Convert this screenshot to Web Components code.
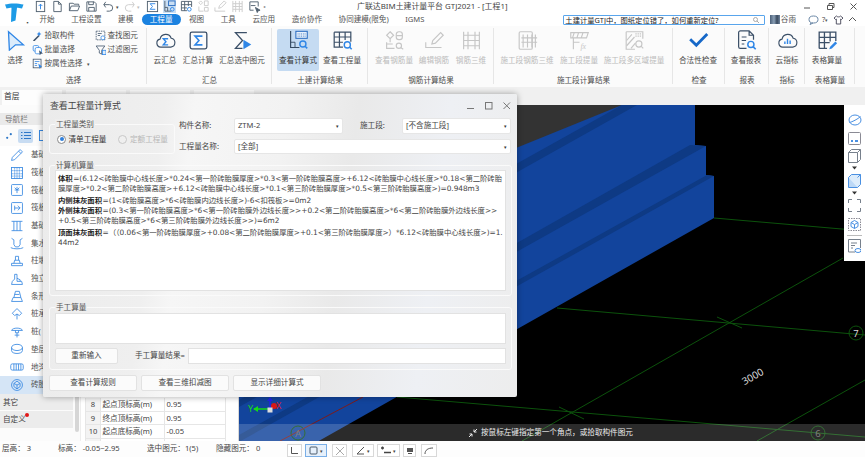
<!DOCTYPE html>
<html lang="zh">
<head>
<meta charset="utf-8">
<title>GTJ2021</title>
<style>
    html, body { margin: 0; padding: 0; background: #fff; overflow: hidden; }
</style>
</head>
<body>

<gtj-app>
    <gtj-header slot="header"></gtj-header>
    <gtj-ribbon slot="ribbon">
        <gtj-group w="147" pad="4">
            <gtj-btn icon="select" w="22">选择</gtj-btn>
            <gtj-mini-col style="margin-left:6px;width:62px">
                <gtj-mini icon="wand">拾取构件</gtj-mini>
                <gtj-mini icon="batch">批量选择</gtj-mini>
                <gtj-mini icon="attr" style="width:70px">按属性选择<i slot="after">▾</i></gtj-mini>
            </gtj-mini-col>
            <gtj-mini-col style="margin-left:1px">
                <gtj-mini icon="find">查找图元</gtj-mini>
                <gtj-mini icon="filter">过滤图元</gtj-mini>
            </gtj-mini-col>
            <span slot="label">选择</span>
        </gtj-group>
        <gtj-group w="125" pad="2">
            <gtj-btn icon="cloudsum" w="32">云汇总</gtj-btn>
            <gtj-btn icon="sumbox" w="34">汇总计算</gtj-btn>
            <gtj-btn icon="sumsel" w="54">汇总选中图元</gtj-btn>
            <span slot="label">汇总</span>
        </gtj-group>
        <gtj-group w="96" pad="5">
            <gtj-btn icon="calcview" w="42" active>查看计算式</gtj-btn>
            <gtj-btn icon="qtyview" w="46">查看工程量</gtj-btn>
            <span slot="label">土建计算结果</span>
        </gtj-group>
        <gtj-group w="126" pad="6">
            <gtj-btn icon="rebarqty" w="40" off>查看钢筋量</gtj-btn>
            <gtj-btn icon="rebaredit" w="40" off>编辑钢筋</gtj-btn>
            <gtj-btn icon="rebar3d" w="34" off>钢筋三维</gtj-btn>
            <span slot="label">钢筋计算结果</span>
        </gtj-group>
        <gtj-group w="179" pad="4">
            <gtj-btn icon="stage3d" w="58" off>施工段钢筋三维</gtj-btn>
            <gtj-btn icon="stageqty" w="46" off>施工段提量</gtj-btn>
            <gtj-btn icon="stagemulti" w="64" off>施工段多区域提量</gtj-btn>
            <span slot="label">施工段计算结果</span>
        </gtj-group>
        <gtj-group w="52" pad="3">
            <gtj-btn icon="check" w="44">合法性检查</gtj-btn>
            <span slot="label">检查</span>
        </gtj-group>
        <gtj-group w="44" pad="2">
            <gtj-btn icon="report" w="38">查看报表</gtj-btn>
            <span slot="label">报表</span>
        </gtj-group>
        <gtj-group w="36" pad="2">
            <gtj-btn icon="cloudidx" w="32">云指标</gtj-btn>
            <span slot="label">指标</span>
        </gtj-group>
        <gtj-group w="50" pad="4">
            <gtj-btn icon="tablecalc" w="36">表格算量</gtj-btn>
            <span slot="label">表格算量</span>
        </gtj-group>
    </gtj-ribbon>
    <gtj-floorbar slot="floorbar"></gtj-floorbar>
    <gtj-nav slot="nav"></gtj-nav>
    <gtj-props slot="props"></gtj-props>
    <gtj-canvas slot="canvas"></gtj-canvas>
    <gtj-status slot="status"></gtj-status>

    <gtj-dialog slot="dialog">
        <span slot="title">查看工程量计算式</span>
        <gtj-calc-form></gtj-calc-form>
    </gtj-dialog>
</gtj-app>

<script>
// stroke colours used by the ribbon icons
const DK = '#3c5068', BL = '#2f86e6', GR = '#c6c6c6';

const ICONS = {
    select: `<path d="M4 2l17 15h-9l-7 6z" fill="#dcecfb" stroke="${BL}" stroke-width="1.5"/>`,
    cloudsum: `<path d="M6.5 19.5a4.6 4.6 0 0 1-.7-9.1A6.6 6.6 0 0 1 18.5 9.400a5.100 5.100 0 0 1-.4 10.100z" fill="none" stroke="${DK}" stroke-width="1.300"/><path d="M15 10H9.500l3 3.500-3 3.500H15" fill="none" stroke="${BL}" stroke-width="1.600"/>`,
    sumbox: `<rect x="2.500" y="2.500" width="19" height="19" rx="2" fill="none" stroke="${DK}" stroke-width="1.500"/><path d="M16.500 7H8l4.500 5L8 17h8.500" fill="none" stroke="${BL}" stroke-width="1.800"/>`,
    sumsel: `<path d="M17 3H4l8 9-8 9h8" fill="none" stroke="${DK}" stroke-width="1.500"/><path d="M13 11l9 5.500-9 5.500z" fill="${BL}"/>`,
    calcview: `<rect x="9" y="1.500" width="13" height="8" fill="#e8f1fb" stroke="#2a6cc0" stroke-width="1.200"/><path d="M11 4.500h9M11 7h9" stroke="#2a6cc0" stroke-dasharray="1 1"/><path d="M3 1v19h10" fill="none" stroke="#33485f" stroke-width="1.300"/><path d="M3 14h5v6" fill="none" stroke="#33485f"/><circle cx="17" cy="16" r="3.500" fill="none" stroke="${BL}" stroke-width="1.600"/><path d="M19.500 18.500L22 21" stroke="${BL}" stroke-width="1.800"/>`,
    qtyview: `<path d="M2.500 2.500h19v11M2.500 2.500v17h10M2.500 8h19M2.500 14h10M8.500 2.500v17M15 2.500v9" fill="none" stroke="${DK}" stroke-width="1.400"/><circle cx="17.500" cy="17" r="3.500" fill="none" stroke="${BL}" stroke-width="1.600"/><path d="M20 19.500l2.500 2.500" stroke="${BL}" stroke-width="1.800"/>`,
    rebarqty: `<g fill="none" stroke="${GR}" stroke-width="1.300"><path d="M7 2l4 4-4 4-4-4zM7 10v4"/><rect x="14" y="2" width="7" height="9" rx="3"/><path d="M14 6.500h7M3 14v7h9M3 16h7"/><circle cx="17" cy="18" r="3"/><path d="M19 20l3 2"/></g>`,
    rebaredit: `<g fill="none" stroke="${GR}" stroke-width="1.300"><path d="M2 14v6h18"/><path d="M9 16l1-4 9-9 3 3-9 9z"/></g>`,
    rebar3d: `<g fill="none" stroke="${GR}" stroke-width="1.300"><path d="M3 2v20M8 2v20M16 2v20M21 2v20M3 6h18M3 12h18M3 18h18"/></g>`,
    stage3d: `<g fill="none" stroke="${GR}" stroke-width="1.300"><rect x="2.500" y="2" width="15" height="20" rx="1.500"/><path d="M7 5v15M12 5v15M17 5v15M21 5v15M5 9h18M5 14h18"/></g>`,
    stageqty: `<g fill="none" stroke="${GR}" stroke-width="1.300"><path d="M5 22V9M2 3h20l-2 6H2zM6 3L4 9M11 3L9 9M16 3l-2 6M5 14h7"/></g><text x="13" y="22" font-size="9" font-style="italic" font-family="Liberation Serif" fill="${GR}">fx</text>`,
    stagemulti: `<g fill="none" stroke="${GR}" stroke-width="1.300"><path d="M2.500 2h19v8M2.500 2v20h10"/><path d="M3 12L9 5M3 18L12 8M8 21l5-6"/><path d="M13 4.500h7M13 7h7" stroke-dasharray="1.500 1"/><circle cx="17" cy="16" r="3.500"/><path d="M19.500 18.500L22 21"/></g>`,
    check: `<path d="M2.500 10.500l7 7L22 4.500" fill="none" stroke="#1668c8" stroke-width="3.200"/>`,
    report: `<path d="M12 21H5a2 2 0 0 1-2-2V3a2 2 0 0 1 2-2h10l5 5v5M15 1v5h5M6.500 8H12M6.500 12h5M6.500 16h3" fill="none" stroke="${DK}" stroke-width="1.400"/><circle cx="17" cy="16.500" r="3.500" fill="none" stroke="${BL}" stroke-width="1.700"/><path d="M19.500 19l3 3" stroke="${BL}" stroke-width="1.900"/>`,
    cloudidx: `<path d="M6.500 19.500a4.600 4.600 0 0 1-.7-9.100A6.600 6.600 0 0 1 18.500 9.400a5.100 5.100 0 0 1-.4 10.100z" fill="none" stroke="${DK}" stroke-width="1.300"/><path d="M9 16v-3M12 16v-6M15 16v-4" stroke="${BL}" stroke-width="1.600"/>`,
    tablecalc: `<path d="M2.500 21V2.500h19v10M2.500 21h9M2.500 8.500h19M2.500 14.500h12M8.500 2.500V21M15 2.500V13" fill="none" stroke="${DK}" stroke-width="1.500"/><path d="M14 22l1-3 6-6 2 2-6 6z" fill="${BL}"/>`,

    wand: `<path d="M2 14L9 7" stroke="${DK}" stroke-width="2"/><path d="M9 2l1 2 2 1-2 1-1 2-1-2-2-1 2-1z" fill="${BL}"/>`,
    batch: `<rect x="1.500" y="2" width="7" height="7" rx="1.500" fill="none" stroke="${BL}"/><rect x="4" y="4.500" width="8" height="8" rx="2" fill="#fff" stroke="${BL}"/><path d="M9 8l5 4-3 .5-1 2.500z" fill="${DK}"/>`,
    attr: `<rect x="1.500" y="1.500" width="10" height="11" fill="none" stroke="${DK}"/><path d="M3.500 4.500h6M3.500 7h3M3.500 9.500h3" stroke="${BL}"/><path d="M8 7l5 4-2.500.5-1 2.500z" fill="${BL}"/>`,
    find: `<rect x="1.500" y="1.500" width="11" height="11" fill="none" stroke="${DK}" stroke-dasharray="2 1"/><path d="M3.500 4.500h5M3.500 7h3" stroke="${DK}"/><circle cx="10" cy="10" r="2.500" fill="#fff" stroke="${BL}"/>`,
    filter: `<path d="M1.500 2.500h11L8.500 8v5l-3-1.500V8z" fill="none" stroke="${DK}"/><rect x="9.500" y="8" width="4.500" height="5.500" fill="#dcecfb" stroke="${BL}"/>`,
};

const NAV_ICONS = [
    `<path d="M2 16l1-4L13 2l3 3L6 15z M11 4l3 3"/>`,
    `<rect x="2" y="2" width="14" height="14"/><path d="M2 6h14M2 10h14M2 13h14M6 2v14M9 2v14M12 2v14" stroke-dasharray="1.500 1"/>`,
    `<rect x="2" y="2" width="14" height="14" rx="1"/><path d="M9 5v8M6 9h6M6 6l3 3 3-3"/>`,
    `<rect x="2" y="2" width="14" height="14" rx="1"/><path d="M6 9h7M10 6l3 3-3 3M6 6v6"/>`,
    `<path d="M2 3h14M2 15h14M5 3v12M9 3v12M13 3v12"/>`,
    `<path d="M2 3l3 2v6l2 3h4l2-3V5l3-2M1 15c3 2 13 2 16 0"/>`,
    `<path d="M2 15h14v-3H2zM5 12l1-4h6l1 4M7 8V3h4v5"/>`,
    `<path d="M2 16h14l-1-4H9V3H6v6L3 12zM9 8l4 2v2"/>`,
    `<path d="M2 16h14l-2-5H4zM5 11l2-8h5l2 8M6 7h6"/>`,
    `<path d="M9 2l6 6-3 3-3-2-3 2-3-3zM9 9v7"/>`,
    `<path d="M2 7c1-4 13-4 14 0zM7 7v3h4V7M9 10v6M6 13h6"/>`,
    `<ellipse cx="9" cy="7" rx="7" ry="4"/><path d="M2 7v4c0 5 14 5 14 0V7"/>`,
    `<rect x="1" y="5" width="16" height="8" rx="2"/><path d="M5 5v8M8 5v8M11 5v8M14 5v8"/>`,
    `<circle cx="9" cy="9" r="7"/><path d="M9 4l4 3v4l-4 3-4-3V7zM5 7l4 2 4-2M9 9v5"/>`,
];

// small helper, every element has its own <style> and an open shadow root
function define(name, css, html, init) {
    customElements.define(name, class extends HTMLElement {
        constructor() {
            super();
            this.attachShadow({ mode: 'open' });
            this.shadowRoot.innerHTML = `<style>${css}</style>${typeof html === 'function' ? html(this) : html}`;
        }
        connectedCallback() {
            if (init) init(this);
        }
    });
}

const FONT = `"Noto Sans", "Noto Sans CJK SC", sans-serif`;

define('gtj-app', `
    :host {
        display: block; position: relative; width: 865px; height: 457px; overflow: hidden;
        font: 7.6px/1.2 ${FONT}; color: #4a4a4a; background: #fff;
    }
    .shell { display: grid; grid-template-columns: 81px 158px 1fr; grid-template-rows: 26px 61px 18px 336px 16px; height: 100%; }
    .full { grid-column: 1 / -1; }
    .main-cell { min-width: 0; min-height: 0; }
    ::slotted([slot="dialog"]) { position: absolute; left: 43px; top: 94px; }
`, `
    <div class="shell">
        <div class="full"><slot name="header"></slot></div>
        <div class="full"><slot name="ribbon"></slot></div>
        <div class="full"><slot name="floorbar"></slot></div>
        <div class="main-cell"><slot name="nav"></slot></div>
        <div class="main-cell"><slot name="props"></slot></div>
        <div class="main-cell"><slot name="canvas"></slot></div>
        <div class="full"><slot name="status"></slot></div>
    </div>
    <slot name="dialog"></slot>
`);

const qat = (d, opt = {}) => `<svg class="q ${opt.cls || ''}" viewBox="0 0 14 14" width="13" height="13" fill="none" stroke="${opt.c || '#50606f'}">${d}</svg>`;

define('gtj-header', `
    :host { display: flex; height: 26px; background: #fff; }
    .logo { width: 31.500px; flex: none; position: relative; }
    .logo svg { display: block; margin: 2px 0 0 4px; }
    .logo i { position: absolute; left: 25px; top: 18px; font: normal 5px ${FONT}; color: #444; }
    .col { flex: 1; min-width: 0; }
    .top { display: flex; height: 13px; align-items: center; }
    .qat { width: 325.500px; flex: none; display: flex; align-items: center; }
    .q { flex: none; margin-right: 4px; }
    .hl { background: #c9def3; }
    .title { flex: none; font-size: 7.900px; color: #444; white-space: nowrap; }
    .win { margin-left: auto; display: flex; gap: 14px; padding-right: 7px; }
    .tabs { display: flex; align-items: center; height: 13px; white-space: nowrap; }
    .tab { padding: 1px 8px; height: 11px; line-height: 9px; box-sizing: border-box; margin-right: 0.500px; color: #555; border-radius: 6px; }
    .tab.on { background: #1b82e0; color: #fff; }
    .search {
        position: relative; flex: none; margin-left: 130px; width: 202px; height: 10px; box-sizing: border-box; border: 1px solid #59a5ec;
        background: #fff; border-radius: 1px; color: #222; font-size: 7.300px; line-height: 8px; padding-left: 1.500px; overflow: hidden;
    }
    .right { display: flex; align-items: center; margin-left: 5px; color: #555; }
    .ava { width: 10px; height: 9px; margin-right: 1px; background: linear-gradient(90deg, #4a5f78, #8a9fb5 40%, #38495e 70%, #6f849c); }
    .right svg { margin-left: 5px; }
`, `
    <div class="logo">
        <svg width="20" height="20" viewBox="0 0 20 20"><path d="M1 2.500C6 1 14 1 19.500 2.500L18 6.500c-2-.5-4-.7-5-.7L11.500 18.500 7 20l.5-14.200c-1.500 0-3 .2-5 .7z" fill="#1d9be6"/></svg>
        <i>▪</i>
    </div>
    <div class="col">
        <div class="top">
            <div class="qat" style="padding-left:2px;box-sizing:border-box">
                ${qat('<rect x="2.500" y="1.500" width="9" height="11"/><path d="M7 10V4.500M5 6.500l2-2 2 2" stroke="#2f86e6"/>')}
                ${qat('<path d="M3 1.500h5l3 3v8H3zM8 1.500v3h3"/>')}
                ${qat('<path d="M1.500 11.500v-8h4l1 1h5v1.500M1.500 11.500l2-5h9l-2 5z"/>')}
                ${qat('<path d="M2 2h8l2 2v8H2zM4 2v3h5V2M4 12V8h6v4"/>')}
                ${qat('<path d="M4 2L2 5h6a3 3 0 0 1 0 7H5M2 5l2 3"/>')}
                <span style="margin:0 4px 0 -3px;font-size:5px">▾</span>
                ${qat('<path d="M10 2l2 3H6a3 3 0 0 0 0 7h3M12 5l-2 3"/>', { c: '#ccc' })}
                <span style="margin:0 6px 0 -3px;font-size:5px;color:#bbb">▾</span>
                ${qat('<rect x="1.500" y="1.500" width="11" height="11"/><path d="M10 4H4.500L7 7l-2.500 3H10" stroke="#2f86e6"/>')}
                ${qat('<rect x="6" y="1" width="7" height="5" stroke="#2a6cc0"/><path d="M2 1v11h7M2 8h3v4"/><circle cx="10" cy="10" r="2" stroke="#2f86e6"/>', { cls: 'hl' })}
                ${qat('<path d="M1.500 1.500h11v6M1.500 1.500v10h6M1.500 5h11M1.500 8.500h6M5 1.500v10M9 1.500v5"/><circle cx="10" cy="10" r="2" stroke="#2f86e6"/>')}
                ${qat('<path d="M4 1l2 2-2 2-2-2zM8 1h4v5H8zM2 7v5h5M8 8h4v4H8z"/>', { c: '#ccc' })}
                ${qat('<path d="M1 8v4h11M5 9l1-3 5-5 2 2-5 5z"/>', { c: '#ccc' })}
                ${qat('<path d="M2 1v12M5 1v12M9 1v12M12 1v12M2 4h10M2 7h10M2 10h10"/>', { c: '#ccc' })}
                ${qat('<path d="M2 2h9v5M2 2v9h4M3 6h5"/><path d="M8 8l5 3-2 .5-1 2z" fill="#50606f"/>')}
                <span style="font-size:6px;margin-left:-1px">₌</span>
            </div>
            <div class="title">广联达BIM土建计量平台 GTJ2021 - [工程1]</div>
            <div class="win">
                <svg width="9" height="9" viewBox="0 0 9 9" fill="none" stroke="#555"><path d="M1 6h6"/></svg>
                <svg width="9" height="9" viewBox="0 0 9 9" fill="none" stroke="#555"><path d="M1.500 3.500h5v4h-5zM3 3.500V1.500h5v4H6.500"/></svg>
                <svg width="9" height="9" viewBox="0 0 9 9" fill="none" stroke="#555"><path d="M1.500 1.500l6 6M7.500 1.500l-6 6"/></svg>
            </div>
        </div>
        <div class="tabs">
            <span class="tab">开始</span><span class="tab">工程设置</span><span class="tab">建模</span><span class="tab on">工程量</span><span class="tab">视图</span><span class="tab">工具</span><span class="tab">云应用</span><span class="tab">造价协作</span><span class="tab">协同建模(限免)</span><span class="tab">IGMS</span>
            <div class="search">土建计量GTJ中，图纸定位错了，如何重新定位?
                <svg style="position:absolute;right:5px;top:1px" width="6" height="6" viewBox="0 0 6 6" fill="none" stroke="#aaa"><circle cx="2.500" cy="2.500" r="2"/><path d="M4 4l2 2"/></svg>
            </div>
            <div class="right">
                <span class="ava"></span><span>谷雨</span>
                <svg style="margin-left:12px" width="11" height="10" viewBox="0 0 11 10" fill="none" stroke="#6a87a6"><ellipse cx="5.500" cy="4.500" rx="4.500" ry="3.500"/><path d="M3 8l-1 1.500L5 8"/></svg>
                <span style="margin-left:3px">?</span><span style="font-size:5px">▾</span>
                <svg width="11" height="10" viewBox="0 0 11 10" fill="none" stroke="#556"><path d="M3.500 1L1 3l1.500 1.500.8-.5v5h4.400V4l.8.500L10 3 7.500 1c-.5 1.200-3.500 1.200-4 0z"/></svg>
                <svg style="margin-left:4px" width="9" height="7" viewBox="0 0 9 7" fill="none" stroke="#555"><path d="M1 5l3.500-3.500L8 5"/></svg>
            </div>
        </div>
    </div>
`);

define('gtj-ribbon', `
    :host { display: flex; height: 61px; background: #fbfbfb; }
`, `<slot></slot>`);

define('gtj-group', `
    :host { display: flex; flex-direction: column; flex: none; box-sizing: border-box; height: 61px; padding-top: 3px; position: relative; }
    .items { display: flex; height: 42px; flex: none; align-items: stretch; }
    .label { text-align: center; margin-top: 3px; height: 13px; line-height: 13px; color: #4d4d4d; white-space: nowrap; }
    .sep { position: absolute; right: 0; top: 2px; bottom: 3px; width: 1px; background: #e6e6e6; }
`, el => `
    <div class="items" style="padding-left:${el.getAttribute('pad')}px"><slot></slot></div>
    <div class="label"><slot name="label"></slot></div>
    <div class="sep"></div>
`, el => { el.style.width = el.getAttribute('w') + 'px'; });

define('gtj-btn', `
    :host { display: flex; flex-direction: column; align-items: center; flex: none; box-sizing: border-box; border-radius: 2px; white-space: nowrap; color: #4d4d4d; }
    :host([active]) { background: #c5dbf2; color: #333; }
    :host([off]) { color: #bcbcbc; }
    svg { display: block; margin-top: 1px; }
    .t { margin-top: 4px; line-height: 10px; }
`, el => `
    <svg width="21" height="21" viewBox="0 0 24 24">${ICONS[el.getAttribute('icon')]}</svg>
    <div class="t"><slot></slot></div>
`, el => { el.style.width = el.getAttribute('w') + 'px'; });

define('gtj-mini-col', `
    :host { display: flex; flex-direction: column; gap: 3px; padding-top: 1px; flex: none; }
`, `<slot></slot>`);

define('gtj-mini', `
    :host { display: flex; align-items: center; gap: 1.500px; height: 11px; white-space: nowrap; color: #4d4d4d; }
    svg { flex: none; }
    ::slotted(i) { font: normal 5px ${FONT}; margin-left: 3px; }
`, el => `
    <svg width="11" height="11" viewBox="0 0 14 14">${ICONS[el.getAttribute('icon')]}</svg>
    <slot></slot><slot name="after"></slot>
`);

define('gtj-floorbar', `
    :host { display: flex; height: 18px; box-sizing: border-box; background: #f0f0f0; padding: 3px 0 0 2px; gap: 4px; }
    .f { width: 60px; height: 15px; background: #fdfdfd; line-height: 13px; padding-left: 2px; box-sizing: border-box; color: #333; font-size: 7.800px; }
    .s { background: #fafafa; }
`, `
    <div class="f">首层</div><div class="f s"></div><div class="f s"></div><div class="f s"></div>
`);

define('gtj-nav', `
    :host { display: block; height: 336px; background: #fbfbfb; overflow: hidden; position: relative; border-right: 1px solid #eee; box-sizing: border-box; }
    .head { margin-top: 8px; height: 12px; background: #eaeaea; width: 75px; line-height: 12px; padding-left: 5px; box-sizing: border-box; color: #777; }
    .tools { display: flex; align-items: center; height: 21px; padding-left: 6px; gap: 6px; box-sizing: border-box; }
    .tools b { width: 15px; height: 14px; border-radius: 2px; background: #c8dcf2; display: grid; place-items: center; }
    .list { width: 75px; background: #fff; }
    .row { display: flex; align-items: center; height: 17.700px; padding-left: 10px; gap: 7px; white-space: nowrap; box-sizing: border-box; color: #555; }
    .row svg { flex: none; }
    .row.on { background: #d5e5f6; }
    .foot { width: 73px; height: 16.500px; margin-top: 1px; background: #ececec; line-height: 16px; padding-left: 3px; box-sizing: border-box; position: relative; color: #444; }
    .dot { position: absolute; left: 25px; top: 2px; width: 4px; height: 4px; border-radius: 50%; background: #e01818; }
    .bar { position: absolute; left: 75px; top: 280px; width: 4px; height: 47px; background: #d6d6d6; border-radius: 2px; }
`, () => {
    // only the start of each label shows beside the dialog
    const names = ['基础', '筏板', '筏板', '筏板', '基础', '集水', '柱墩', '独立', '条形', '桩承', '桩(', '垫层', '地沟', '砖胎'];
    const rows = names.map((n, i) => `
        <div class="row ${i === 13 ? 'on' : ''}">
            <svg width="14" height="14" viewBox="0 0 18 18" fill="none" stroke="#3a8ae2" stroke-width="1.100">${NAV_ICONS[i]}</svg>
            <span>${n}</span>
        </div>`).join('');
    return `
        <div class="head">导航栏</div>
        <div class="tools">
            <svg width="6" height="6" viewBox="0 0 6 6" fill="#2f78c8"><circle cx="1.200" cy="4.800" r="1.100"/><circle cx="4.800" cy="1.200" r="1.100"/></svg>
            <b><svg width="10" height="9" viewBox="0 0 10 9" stroke="#2f78c8"><path d="M3 1.500h7M3 4.500h7M3 7.500h7M0 1.500h1.500M0 4.500h1.500M0 7.500h1.500"/></svg></b>
            <svg width="11" height="11" viewBox="0 0 11 11" fill="none" stroke="#3a8ae2"><rect x=".5" y=".5" width="10" height="10"/></svg>
        </div>
        <div class="list">${rows}</div>
        <div class="foot" style="margin-top:0">其它</div>
        <div class="foot">自定义<i class="dot"></i></div>
        <i class="bar"></i>
    `;
});

define('gtj-props', `
    :host { display: block; height: 336px; background: #fff; overflow: hidden; border-right: 1px solid #d8d8d8; box-sizing: border-box; }
    .t { margin: 293px 0 0 4px; width: 140px; display: grid; grid-template-columns: 15px 64px 61px; grid-auto-rows: 13.500px; border-left: 1px solid #e6e6e6; box-sizing: border-box; }
    .t > div { border-right: 1px solid #e6e6e6; border-bottom: 1px solid #e6e6e6; box-sizing: border-box; line-height: 12.500px; padding-left: 1.500px; white-space: nowrap; color: #444; }
    .t > .n { background: #f3f3f3; text-align: center; padding: 0; }
`, `
    <div class="t">
        <div class="n">8</div><div>起点顶标高(m)</div><div>0.95</div>
        <div class="n">9</div><div>终点顶标高(m)</div><div>0.95</div>
        <div class="n">10</div><div>起点底标高(m)</div><div>-0.05</div>
        <div class="n"></div><div></div><div></div>
    </div>
`);

define('gtj-canvas', `
    :host { display: flex; flex-direction: column; justify-content: flex-end; position: relative; height: 336px; background: #000; overflow: hidden; }
    svg.scene { position: absolute; inset: 0; }
    .hint { position: relative; height: 17px; background: rgba(255,255,255,.17); display: flex; align-items: center; padding-left: 229px; gap: 3px; color: #eee; white-space: nowrap; }
    .tools { position: absolute; right: 0; top: 0; width: 21px; height: 156px; background: #fff; display: flex; flex-direction: column; align-items: center; padding-top: 8px; box-sizing: border-box; }
    .tools svg { display: block; flex: none; }
    .tools svg.arrow { margin-top: 2px; }
`, `
    <svg class="scene" width="626" height="336" viewBox="239 105 626 336">
        <polygon points="239,105 622,105 518,164 239,320" fill="#333"/>
        <polygon points="622,105 695,105 695,145 706,146 706,175 714,176 714,218 239,486 239,260" fill="#12449c"/>
        <polygon points="622,105 637,105 239,328 239,318" fill="#0e3a84"/>
        <polygon points="690,145 706,146 239,407 239,400" fill="#0e3a84"/>
        <polygon points="707,175 714,176 239,442 239,435" fill="#0e3a84"/>
        <g stroke="#0c520c" stroke-width="1" fill="none">
            <path d="M714 218L865 231"/>
            <path d="M557 308L865 335"/>
            <path d="M397 397L865 437"/>
            <path d="M522 441L843 258"/>
            <path d="M757 441L865 380"/>
            <path d="M717 317L742 328M559 407L584 419"/>
            <circle cx="856" cy="333" r="7"/>
            <circle cx="818" cy="433" r="7"/>
            <circle cx="298" cy="433" r="7"/>
        </g>
        <path d="M363 397L280 441" stroke="#7c1c1c" fill="none"/>
        <text x="856" y="336.500" text-anchor="middle" font-size="9.500" fill="#ddd" font-family="Noto Sans">7</text>
        <text x="818" y="436.500" text-anchor="middle" font-size="9.500" fill="#666" font-family="Noto Sans">6</text>
        <text x="298" y="436.500" text-anchor="middle" font-size="9.500" fill="#666" font-family="Noto Sans">A</text>
        <text x="753" y="380" text-anchor="middle" font-size="10" fill="#ddd" font-family="Noto Sans" transform="rotate(-30 753 377)">3000</text>
        <path d="M254 409H270" stroke="#17d917" stroke-width="1.500"/><path d="M253 409l5-3v6z" fill="#17d917"/>
        <path d="M270 409V399" stroke="#2222e8" stroke-width="1.500"/><path d="M270 397l-3 4h6z" fill="#2222e8"/>
        <circle cx="274" cy="406" r="3" fill="#d81818"/>
        <rect x="267.500" y="407.500" width="5" height="5" fill="#ddd"/>
        <text x="248" y="412" font-size="9" fill="#17d917" font-family="Noto Sans">Y</text>
        <text x="276" y="409" font-size="9" fill="#e01818" font-family="Noto Sans">X</text>
    </svg>
    <div class="hint">
        <svg width="10" height="10" viewBox="0 0 10 10" fill="none" stroke="#eee"><path d="M1 9l3-3M1.500 6H4v2.500M9 1L6 4M6 1.500V4h2.500"/></svg>
        <span>按鼠标左键指定第一个角点，或拾取构件图元</span>
    </div>
    <div class="tools">
        <svg width="14" height="14" viewBox="0 0 14 14" fill="none" stroke="#4a90e2"><ellipse cx="7" cy="7" rx="6" ry="5"/><path d="M1.500 9.500C4 9 10 6 12.500 3.500"/></svg>
        <svg style="margin-top:5px" width="13" height="13" viewBox="0 0 13 13" fill="none" stroke="#8a8a94"><rect x=".5" y=".5" width="12" height="12" rx="1"/><path d="M3 9h2M7 9h3" stroke="#4a90e2" stroke-width="2"/></svg>
        <svg style="margin-top:4px" width="13" height="14" viewBox="0 0 13 14" fill="none" stroke="#77808c"><path d="M.5 3.500h9v10h-9zM.5 3.500l3-3h9v10l-3 3M9.500 3.500l3-3"/></svg>
        <svg class="arrow" width="5" height="6" viewBox="0 0 5 6" fill="#333"><path d="M0 1.500h5L2.500 4.500z"/></svg>
        <svg style="margin-top:3px" width="13" height="14" viewBox="0 0 13 14" stroke="#4a90e2"><path d="M.5 3.500h9v10h-9z" fill="#bcd8f6"/><path d="M.5 3.500l3-3h9v10l-3 3M9.500 3.500l3-3" fill="#dcecfb"/></svg>
        <svg class="arrow" width="5" height="6" viewBox="0 0 5 6" fill="#333"><path d="M0 1.500h5L2.500 4.500z"/></svg>
        <svg style="margin-top:2.500px" width="13" height="13" viewBox="0 0 13 13" fill="none" stroke="#77808c"><path d="M.5 4V.5H4M9 .5h3.500V4M12.500 9v3.500H9M4 12.500H.5V9"/></svg>
        <svg style="margin-top:6px" width="13" height="13" viewBox="0 0 13 13" fill="none" stroke="#8a8a94"><rect x=".5" y=".5" width="12" height="12" stroke-dasharray="1.500 1"/><path d="M6.500 2.500l3.500 2v4l-3.500 2-3.500-2v-4zM3 4.500l3.500 2 3.500-2M6.500 6.500v4" stroke="#4a90e2"/></svg>
        <div style="width:15px;height:1px;background:#bbb;flex:none;margin:4px 0 3px"></div>
        <svg width="13" height="14" viewBox="0 0 13 14" fill="none" stroke="#77808c"><path d="M7 13H.5V.5h12V9M3 4h6M3 6.500h4M3 9h2"/><ellipse cx="10" cy="11.500" rx="3" ry="2" stroke="#4a90e2"/></svg>
    </div>
`);

define('gtj-status', `
    :host { display: flex; align-items: center; height: 16px; background: #fdfdfd; white-space: nowrap; color: #444; position: relative; }
    .it { flex: none; }
    .tools { position: absolute; left: 287px; top: 3px; display: flex; gap: 3px; }
    .b { height: 13px; border: 1px solid #d8d8d8; box-sizing: border-box; display: flex; align-items: center; justify-content: center; gap: 2px; background: #fff; font-size: 5px; }
    .b.on { border-color: #79aee6; background: #e6f0fb; }
`, `
    <span class="it" style="margin-left:2px;width:56px">层高： 3</span>
    <span class="it" style="width:89px">标高： -0.05~2.95</span>
    <span class="it" style="width:69px">选中图元：1(5)</span>
    <span class="it">隐藏图元： 0</span>
    <div class="tools">
        <div class="b" style="width:15px"><svg width="9" height="9" viewBox="0 0 9 9" fill="none" stroke="#555"><path d="M1.500 1v6.500H8"/></svg></div>
        <div class="b on" style="width:22px"><svg width="9" height="9" viewBox="0 0 9 9" fill="none" stroke="#4a5a6a"><rect x="1" y="1" width="7" height="7" rx="1"/></svg>▾</div>
        <div class="b" style="width:15px;margin-left:2px"><svg width="10" height="10" viewBox="0 0 10 10" fill="none" stroke="#aaa"><path d="M1 1l8 8M9 1l-8 8"/></svg></div>
        <div class="b" style="width:22px;margin-left:2px"><svg width="9" height="9" viewBox="0 0 9 9" fill="none" stroke="#555"><path d="M8 1L1 8h7"/></svg>▾</div>
        <div class="b" style="width:23px"><svg width="10" height="9" viewBox="0 0 10 9" fill="none" stroke="#444"><path d="M0 2h3M1.500 .5v3M3 6.500h7" stroke-width="1.300"/></svg>▾</div>
        <div class="b" style="width:13px"><svg width="8" height="8" viewBox="0 0 8 8" fill="#555"><rect x="1" y="1" width="6" height="4"/><rect x="2" y="6" width="4" height="1"/></svg></div>
        <div class="b" style="width:16px;margin-left:2px"><svg width="10" height="9" viewBox="0 0 10 9" fill="none" stroke="#555"><path d="M1 8c0-4 3-6 8-6"/></svg></div>
    </div>
`);

define('gtj-dialog', `
    :host {
        display: block; width: 474px; height: 303px; box-sizing: border-box; padding: 0 5px 0 6px; border-radius: 2px;
        background: linear-gradient(97deg, #ebebeb 0, #efefef 24%, #f6f6f6 30%, #f2f2f2 48%, #e9e9e9 62%, #eef0f4 80%, #ededed 100%);
        box-shadow: 0 0 6px rgba(0,0,0,.35);
        color: #4a4a4a;
    }
    .bar { display: flex; align-items: center; height: 24px; font-size: 8.900px; color: #444; padding-top: 0; }
    .win { margin-left: auto; display: flex; gap: 8px; margin-right: 0; }
`, `
    <div class="bar">
        <span style="margin-left:1px"><slot name="title"></slot></span>
        <div class="win">
            <svg width="10" height="10" viewBox="0 0 10 10" fill="none" stroke="#777"><path d="M1 7.500h7"/></svg>
            <svg width="10" height="10" viewBox="0 0 10 10" fill="none" stroke="#777"><rect x="1.500" y="1.500" width="6.500" height="6.500"/></svg>
            <svg width="10" height="10" viewBox="0 0 10 10" fill="none" stroke="#777"><path d="M1.500 1.500l6.500 6.500M8 1.500L1.500 8"/></svg>
        </div>
    </div>
    <slot></slot>
`);

define('gtj-fieldset', `
    :host { display: block; position: relative; box-sizing: border-box; border: 1px solid #fafafa; border-radius: 3px; }
    .lg { position: absolute; left: 5px; top: -6px; line-height: 10px; padding: 0 1px; background: #eeeeee; color: #555; }
`, `<span class="lg"><slot name="legend"></slot></span><slot></slot>`);

define('gtj-select', `
    :host { display: flex; align-items: center; box-sizing: border-box; background: #fff; border: 1px solid #e6e6e6; border-radius: 2px; padding: 0 3px; color: #444; }
    .t { flex: 1; white-space: nowrap; }
    i { font: normal 5px ${FONT}; color: #333; }
`, `<span class="t"><slot></slot></span><i>▾</i>`);

define('gtj-button', `
    :host { display: flex; align-items: center; justify-content: center; box-sizing: border-box; background: #fbfbfb; border: 1px solid #e2e2e2; border-radius: 2px; height: 16px; color: #444; white-space: nowrap; }
`, `<slot></slot>`);

define('gtj-radio', `
    :host { display: inline-flex; align-items: center; gap: 2.500px; white-space: nowrap; color: #333; }
    :host([off]) { color: #b8b8b8; }
    i { width: 7px; height: 7px; border-radius: 50%; border: 1px solid #8a8a8a; background: #fff; display: grid; place-items: center; box-sizing: content-box; }
    :host([off]) i { border-color: #c8c8c8; background: #efefef; }
    b { width: 4px; height: 4px; border-radius: 50%; background: #2f7fdc; }
    :host([off]) b { display: none; }
`, `<i><b></b></i><slot></slot>`);

define('gtj-calc-form', `
    :host { display: block; }
    .top { display: grid; grid-template-columns: 126px 4px 55px 109px 59px 109px; grid-template-rows: 16px 15px; row-gap: 5px; align-items: center; }
    .kind { grid-column: 1; grid-row: 1 / 3; align-self: stretch; margin-top: 6px; display: flex; align-items: center; gap: 12px; padding: 1px 0 0 7px; }
    .lbl { color: #444; white-space: nowrap; }
    .sel { align-self: stretch; }
    .calc { margin-top: 11px; height: 131px; padding: 4px 5px; }
    .box { background: #fff; border: 1px solid #e2e2e2; box-sizing: border-box; }
    .text { height: 121px; padding: 2px 0 0 2px; font: 7.400px/10.750px "DejaVu Sans", "Noto Sans CJK SC", sans-serif; letter-spacing: -.06px; white-space: nowrap; overflow: hidden; color: #444; }
    .text b { color: #222; font-weight: 700; margin-right: .5px; font-family: "Noto Sans CJK SC", sans-serif; }
    .text div { height: 10.750px; }
    .manual { margin-top: 11px; height: 63px; padding: 5px 5px 0; }
    .manual .box.area { height: 31px; }
    .row { display: flex; align-items: center; margin-top: 4px; }
    .row .box { flex: 1; height: 16px; margin-left: 3px; }
    .foot { display: flex; gap: 4px; margin-top: 5px; }
`, `
    <div class="top">
        <gtj-fieldset class="kind">
            <span slot="legend">工程量类别</span>
            <gtj-radio>清单工程量</gtj-radio>
            <gtj-radio off>定额工程量</gtj-radio>
        </gtj-fieldset>
        <span class="lbl" style="grid-column:3">构件名称:</span>
        <gtj-select class="sel" style="grid-column:4">ZTM-2</gtj-select>
        <span class="lbl" style="grid-column:5;padding-left:17px">施工段:</span>
        <gtj-select class="sel" style="grid-column:6">[不含施工段]</gtj-select>
        <span class="lbl" style="grid-column:3;grid-row:2">工程量名称:</span>
        <gtj-select class="sel" style="grid-column:4 / 7;grid-row:2">[全部]</gtj-select>
    </div>
    <gtj-fieldset class="calc">
        <span slot="legend">计算机算量</span>
        <div class="box text">
            <div><b>体积</b>=(6.12&lt;砖胎膜中心线长度&gt;*0.24&lt;第一阶砖胎膜厚度&gt;*0.3&lt;第一阶砖胎膜高度&gt;+6.12&lt;砖胎膜中心线长度&gt;*0.18&lt;第二阶砖胎</div>
            <div>膜厚度&gt;*0.2&lt;第二阶砖胎膜高度&gt;+6.12&lt;砖胎膜中心线长度&gt;*0.1&lt;第三阶砖胎膜厚度&gt;*0.5&lt;第三阶砖胎膜高度&gt;)=0.948m3</div>
            <div><b>内侧抹灰面积</b>=(1&lt;砖胎膜高度&gt;*6&lt;砖胎膜内边线长度&gt;)-6&lt;扣筏板&gt;=0m2</div>
            <div><b>外侧抹灰面积</b>=(0.3&lt;第一阶砖胎膜高度&gt;*6&lt;第一阶砖胎膜外边线长度&gt;&gt;+0.2&lt;第二阶砖胎膜高度&gt;*6&lt;第二阶砖胎膜外边线长度&gt;&gt;</div>
            <div>+0.5&lt;第三阶砖胎膜高度&gt;*6&lt;第三阶砖胎膜外边线长度&gt;&gt;)=6m2</div>
            <div><b>顶面抹灰面积</b>=（（0.06&lt;第一阶砖胎膜厚度&gt;+0.08&lt;第二阶砖胎膜厚度&gt;+0.1&lt;第三阶砖胎膜厚度&gt;）*6.12&lt;砖胎膜中心线长度&gt;)=1.</div>
            <div>44m2</div>
        </div>
    </gtj-fieldset>
    <gtj-fieldset class="manual">
        <span slot="legend">手工算量</span>
        <div class="box area"></div>
        <div class="row">
            <gtj-button style="width:63px">重新输入</gtj-button>
            <span class="lbl" style="margin-left:17px">手工算量结果=</span>
            <div class="box"></div>
        </div>
    </gtj-fieldset>
    <div class="foot">
        <gtj-button style="width:88px">查看计算规则</gtj-button>
        <gtj-button style="width:88px">查看三维扣减图</gtj-button>
        <gtj-button style="width:88px">显示详细计算式</gtj-button>
    </div>
`);
</script>
</body>
</html>
